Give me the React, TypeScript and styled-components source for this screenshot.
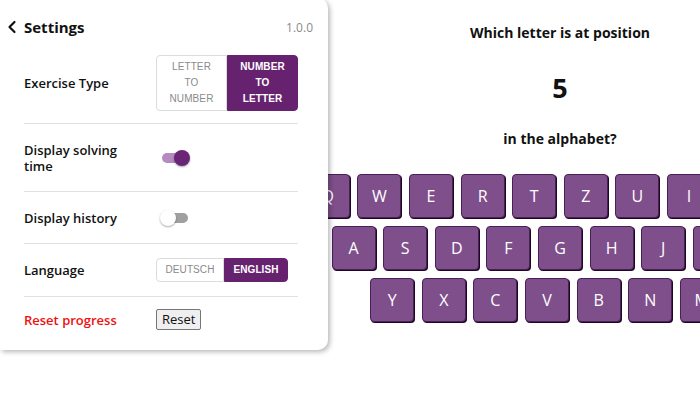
import React from 'react';
import styled, { createGlobalStyle } from 'styled-components';
import { ChevronLeft } from 'lucide-react';

const GlobalStyle = createGlobalStyle`
  html, body { margin: 0; padding: 0; background: #fff; overflow: hidden; }
  body { font-family: "Open Sans", "Noto Sans", sans-serif; color: #111; }
  * { box-sizing: border-box; }
`;

const Page = styled.div`
  position: relative;
  width: 700px;
  height: 400px;
  overflow: hidden;
`;

const Main = styled.main`
  margin-left: 420px;
  width: 280px;
  display: flex;
  flex-direction: column;
  align-items: center;
  padding-top: 24px;
`;

const Question = styled.div`
  font-weight: 700;
  font-size: 14px;
  line-height: 18px;
  text-align: center;
  white-space: nowrap;
`;

const BigNumber = styled.div`
  font-weight: 700;
  font-size: 27px;
  line-height: 32px;
  margin: 30px 0 26px;
`;

const Keyboard = styled.div`
  margin-top: 26px;
  display: flex;
  flex-direction: column;
  gap: 8px;
  width: 100%;
`;

const KeyRow = styled.div<{ $shift?: number }>`
  display: flex;
  justify-content: center;
  gap: 7.6px;
  padding-right: ${(p) => p.$shift || 0}px;
`;

const Key = styled.button`
  flex: none;
  width: 44px;
  height: 44px;
  background: #7e4f8b;
  border: 1px solid #4b1f57;
  border-radius: 4px;
  box-shadow: 1px 1px 0 #1c0822;
  color: #fff;
  font-family: "Open Sans", "Noto Sans", sans-serif;
  font-size: 16px;
  padding: 0;
`;

const Panel = styled.aside`
  position: absolute;
  left: 0;
  top: -2px;
  width: 328px;
  padding: 2px 15px 8px 0;
  background: #fff;
  border-radius: 0 10px 10px 0;
  box-shadow: 2px 2px 5px rgba(0, 0, 0, 0.28);
  z-index: 2;
`;

const Header = styled.header`
  display: flex;
  align-items: center;
  height: 20px;
  margin-top: 17px;
  padding-left: 2px;
`;

const Title = styled.h1`
  margin: 0 0 0 2px;
  font-size: 15px;
  font-weight: 700;
  line-height: 20px;
  flex: 1;
`;

const Version = styled.span`
  font-size: 12px;
  color: #8a8a8a;
`;

const Body = styled.div`
  margin-top: 6px;
  padding: 0 15px 0 24px;
`;

const Row = styled.div<{ $h?: number; $last?: boolean }>`
  display: flex;
  align-items: center;
  padding: 12px 0;
  min-height: ${(p) => (p.$h ? `${p.$h}px` : 'auto')};
  border-bottom: ${(p) => (p.$last ? 'none' : '1px solid #e0e0e0')};
`;

const Label = styled.div<{ $danger?: boolean }>`
  width: 110px;
  font-size: 13px;
  font-weight: 600;
  line-height: 16px;
  color: ${(p) => (p.$danger ? '#f01010' : '#111')};
`;

const Control = styled.div`
  margin-left: 22px;
  display: flex;
  align-items: center;
`;

const Segmented = styled.div`
  display: flex;
`;

const SegButton = styled.button<{ $active?: boolean; $w: number }>`
  width: ${(p) => p.$w}px;
  padding: 3px 0;
  font-family: "Liberation Sans", Arial, sans-serif;
  font-size: 10px;
  line-height: 16px;
  letter-spacing: 0.1px;
  text-transform: uppercase;
  text-align: center;
  font-weight: ${(p) => (p.$active ? 700 : 400)};
  color: ${(p) => (p.$active ? '#fff' : '#8a8a8a')};
  background: ${(p) => (p.$active ? '#67226f' : '#fff')};
  border: ${(p) => (p.$active ? '1px solid #67226f' : '1px solid #dcdcdc')};
  border-radius: ${(p) => (p.$active ? '0 4px 4px 0' : '4px 0 0 4px')};
`;

const Word = styled.span`
  display: block;
`;

const Switch = styled.div`
  position: relative;
  width: 30px;
  height: 20px;
  margin-left: 4px;
`;

const Track = styled.span<{ $on?: boolean }>`
  position: absolute;
  left: ${(p) => (p.$on ? 2 : 4)}px;
  top: 5px;
  width: 24px;
  height: 10px;
  border-radius: 5px;
  background: ${(p) => (p.$on ? '#b48ac0' : '#a0a0a0')};
`;

const Knob = styled.span<{ $on?: boolean }>`
  position: absolute;
  top: 2px;
  left: ${(p) => (p.$on ? 14 : 0)}px;
  width: 16px;
  height: 16px;
  border-radius: 50%;
  background: ${(p) => (p.$on ? '#6a2577' : '#fff')};
  box-shadow: 0 1px 2px rgba(0, 0, 0, 0.35);
`;

const ResetButton = styled.button`
  height: 21px;
  padding: 0 5px;
  font-family: "Open Sans", "Noto Sans", sans-serif;
  font-size: 13px;
  line-height: 19px;
  color: #111;
  background: #efefef;
  border: 1px solid #767676;
  border-radius: 2px;
`;

const Toggle = ({ on }: { on?: boolean }) => (
  <Switch>
    <Track $on={on} />
    <Knob $on={on} />
  </Switch>
);

const rows = ['QWERTZUIOP', 'ASDFGHJKL', 'YXCVBNM'];

export default function App() {
  return (
    <Page>
      <GlobalStyle />
      <Panel>
        <Header>
          <ChevronLeft size={20} strokeWidth={2.6} color="#111" />
          <Title>Settings</Title>
          <Version>1.0.0</Version>
        </Header>
        <Body>
          <Row>
            <Label>Exercise Type</Label>
            <Control>
              <Segmented>
                <SegButton $w={71}>
                  <Word>Letter</Word>
                  <Word>to</Word>
                  <Word>Number</Word>
                </SegButton>
                <SegButton $w={71} $active>
                  <Word>Number</Word>
                  <Word>to</Word>
                  <Word>Letter</Word>
                </SegButton>
              </Segmented>
            </Control>
          </Row>
          <Row $h={68}>
            <Label>Display solving time</Label>
            <Control>
              <Toggle on />
            </Control>
          </Row>
          <Row $h={52}>
            <Label>Display history</Label>
            <Control>
              <Toggle />
            </Control>
          </Row>
          <Row $h={53}>
            <Label>Language</Label>
            <Control>
              <Segmented>
                <SegButton $w={68}>Deutsch</SegButton>
                <SegButton $w={64} $active>English</SegButton>
              </Segmented>
            </Control>
          </Row>
          <Row $last>
            <Label $danger>Reset progress</Label>
            <Control>
              <ResetButton>Reset</ResetButton>
            </Control>
          </Row>
        </Body>
      </Panel>
      <Main>
        <Question>Which letter is at position</Question>
        <BigNumber>5</BigNumber>
        <Question>in the alphabet?</Question>
        <Keyboard>
          {rows.map((r, i) => (
            <KeyRow key={r} $shift={i === 2 ? 26 : 0}>
              {r.split('').map((c) => (
                <Key key={c}>{c}</Key>
              ))}
            </KeyRow>
          ))}
        </Keyboard>
      </Main>
    </Page>
  );
}
